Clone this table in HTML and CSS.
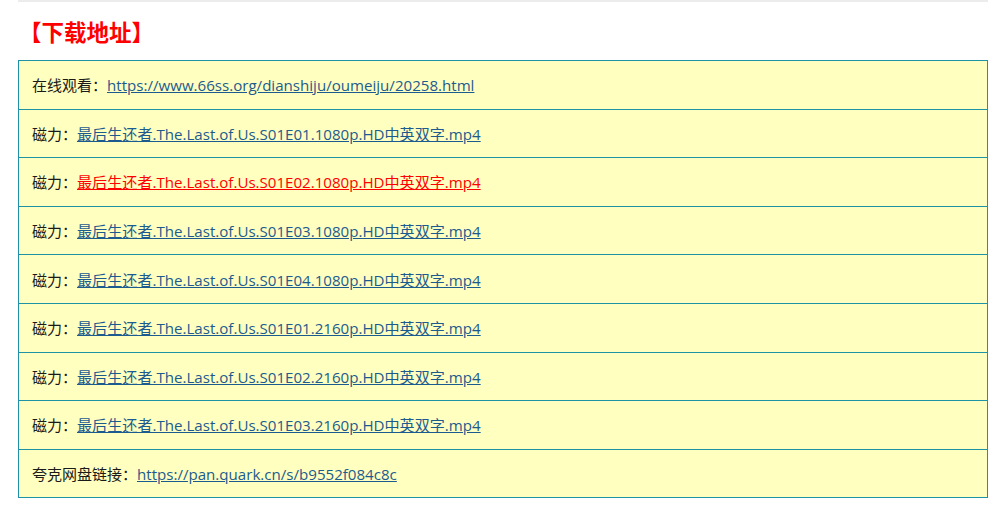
FILE: index.html
```html
<!DOCTYPE html>
<html lang="zh-CN">
<head>
<meta charset="utf-8">
<title>下载地址</title>
<link rel="stylesheet" href="styles.css">
</head>
<body>
<div class="content">
  <h2 class="dl-title">【下载地址】</h2>
  <table class="dl-table">
    <tr><td>在线观看：<a href="#">https://www.66ss.org/dianshiju/oumeiju/20258.html</a></td></tr>
    <tr><td>磁力：<a href="#">最后生还者.The.Last.of.Us.S01E01.1080p.HD中英双字.mp4</a></td></tr>
    <tr><td>磁力：<a href="#" class="visited">最后生还者.The.Last.of.Us.S01E02.1080p.HD中英双字.mp4</a></td></tr>
    <tr><td>磁力：<a href="#">最后生还者.The.Last.of.Us.S01E03.1080p.HD中英双字.mp4</a></td></tr>
    <tr><td>磁力：<a href="#">最后生还者.The.Last.of.Us.S01E04.1080p.HD中英双字.mp4</a></td></tr>
    <tr><td>磁力：<a href="#">最后生还者.The.Last.of.Us.S01E01.2160p.HD中英双字.mp4</a></td></tr>
    <tr><td>磁力：<a href="#">最后生还者.The.Last.of.Us.S01E02.2160p.HD中英双字.mp4</a></td></tr>
    <tr><td>磁力：<a href="#">最后生还者.The.Last.of.Us.S01E03.2160p.HD中英双字.mp4</a></td></tr>
    <tr><td>夸克网盘链接：<a href="#">https://pan.quark.cn/s/b9552f084c8c</a></td></tr>
  </table>
</div>
</body>
</html>
```

FILE: styles.css
```css
html, body {
  margin: 0;
  padding: 0;
  background: #ffffff;
}

body {
  font-family: "Open Sans", "Noto Sans CJK SC", sans-serif;
  color: #1a1a1a;
}

.content {
  margin: 0 20px 0 18px;
  border-top: 2px solid #ececec;
}

.dl-title {
  margin: 0;
  padding: 15px 0 15px 1px;
  font-family: "Noto Sans CJK SC", sans-serif;
  font-size: 22.5px;
  line-height: 28px;
  font-weight: 700;
  color: #ff0000;
}

.dl-table {
  width: 100%;
  border-collapse: collapse;
  background: #ffffbf;
}

.dl-table td {
  border: 1px solid #1d93a5;
  height: 46.6px;
  padding: 1px 13px 0;
  font-size: 15px;
  line-height: 20px;
  font-family: "Noto Sans CJK SC", sans-serif;
}

.dl-table a {
  font-family: "Open Sans", "Noto Sans CJK SC", sans-serif;
  font-size: 15.1px;
  color: #1b5b8f;
  text-decoration: underline;
}

.dl-table a.visited {
  color: #ff0000;
}
```
